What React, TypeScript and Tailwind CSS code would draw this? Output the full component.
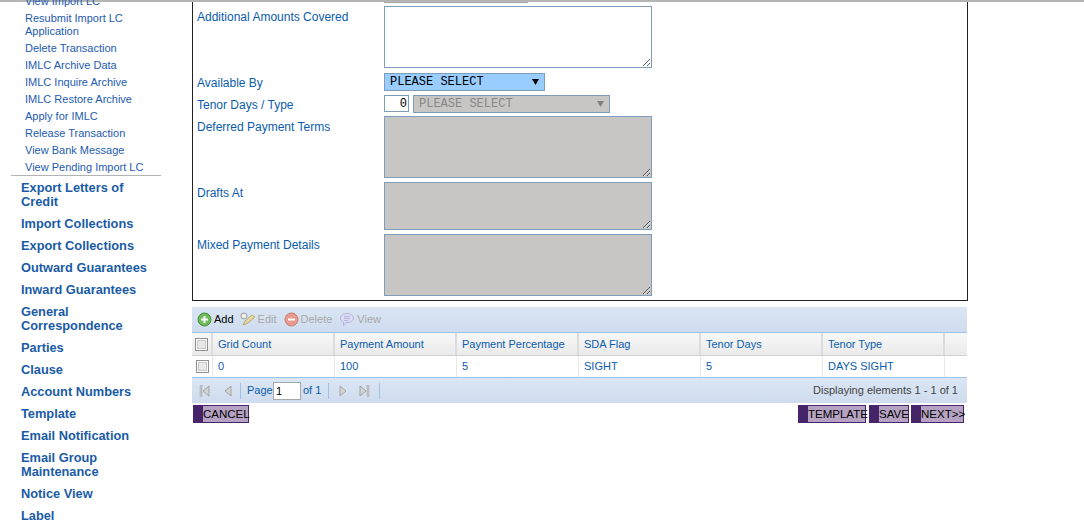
import React from "react";

const sub = ["Delete Transaction", "IMLC Archive Data", "IMLC Inquire Archive", "IMLC Restore Archive", "Apply for IMLC", "Release Transaction", "View Bank Message", "View Pending Import LC"];
const heads = ["Export Letters of Credit", "Import Collections", "Export Collections", "Outward Guarantees", "Inward Guarantees", "General Correspondence", "Parties", "Clause", "Account Numbers", "Template", "Email Notification", "Email Group Maintenance", "Notice View", "Label"];
const cols = [
  ["Grid Count", "0", "w-[122px]"],
  ["Payment Amount", "100", "w-[122px]"],
  ["Payment Percentage", "5", "w-[122px]"],
  ["SDA Flag", "SIGHT", "w-[122px]"],
  ["Tenor Days", "5", "w-[122px]"],
  ["Tenor Type", "DAYS SIGHT", "w-[122px]"],
];

function Check() {
  return (
    <span className="flex h-[13px] w-[13px] items-center justify-center border border-[#8f8f8f] bg-white">
      <span className="h-[9px] w-[9px] border border-[#c8c8c8] bg-[#e8e8e8]" />
    </span>
  );
}

function Row({ label, children, className, pad }: { label: string; children: React.ReactNode; className: string; pad: string }) {
  return (
    <div className={`flex ${className}`}>
      <div className={`w-[191px] shrink-0 pl-[4px] ${pad} text-[12px] leading-[14px] text-[#0b5cad]`}>{label}</div>
      {children}
    </div>
  );
}

function Area({ h, off }: { h: string; off?: boolean }) {
  return (
    <textarea
      disabled={off}
      className={`block w-[268px] border border-[#7f9db9] ${h} ${off ? "bg-[#c8c5c5]" : "bg-white"}`}
    />
  );
}

function Sel({ off, w, arrow }: { off?: boolean; w: string; arrow: string }) {
  return (
    <div className={`relative h-[18px] ${w}`}>
      <select
        disabled={off}
        className={`block h-[18px] w-full appearance-none border border-[#7f9db9] pl-[5px] font-['Liberation_Mono',monospace] text-[12px] leading-[14px] ${off ? "bg-[#c8c5c5] text-[#888] opacity-100" : "bg-[#99ccff] text-black"}`}
      >
        <option>PLEASE SELECT</option>
      </select>
      <svg width="7" height="6" viewBox="0 0 7 6" className={`pointer-events-none absolute top-[6px] ${arrow}`}>
        <path d="M0 0H7L3.500 6Z" fill={off ? "#808080" : "#000"} />
      </svg>
    </div>
  );
}

function Btn({ text, w }: { text: string; w: string }) {
  return (
    <div className={`flex h-[18px] ${w} border border-[#46246a] bg-[#b6a2c2]`}>
      <span className="h-full w-[9px] shrink-0 bg-[#46246a]" />
      <span className="whitespace-nowrap text-[11.5px] leading-[16px] text-black">{text}</span>
    </div>
  );
}

function Pg({ kind }: { kind: "first" | "prev" | "next" | "last" }) {
  const left = kind === "first" || kind === "prev";
  const bar = kind === "first" || kind === "last";
  return (
    <svg width="12" height="14" viewBox="0 0 12 14" className="block">
      {bar && <rect x={left ? 1 : 9} y="1.5" width="2" height="11" fill="#c4c4c4" stroke="#a8a8a8" strokeWidth="0.5" />}
      <path d={left ? "M10 2 L4 7 L10 12 Z" : "M2 2 L8 7 L2 12 Z"} fill="#d4d4d4" stroke="#a4a4a4" />
    </svg>
  );
}

function Sep({ className }: { className: string }) {
  return <span className={`block h-[16px] w-px bg-[#9dc3ea] ${className}`} />;
}

export default function App() {
  return (
    <div className="h-[524px] w-[1084px] overflow-hidden bg-white font-['Liberation_Sans',sans-serif]">
      <div className="h-[2px] w-full bg-[#b4b4b4]" />
      <div className="flex">
        <aside className="w-[192px] shrink-0">
          <div className="-mb-[3px] -mt-[7px] pl-[25px] text-[11px] leading-[13px] text-[#1d5bb0]">
            <div className="h-[17px]">View Import LC</div>
            <div className="h-[30px] w-[130px]">Resubmit Import LC Application</div>
            {sub.map((s) => (
              <div key={s} className="h-[17px] whitespace-nowrap">{s}</div>
            ))}
          </div>
          <div className="ml-[11px] h-px w-[150px] bg-[#b4b4b4]" />
          <div className="mt-[5px] flex flex-col gap-[8px] pl-[21px] text-[12.8px] font-bold leading-[14px] text-[#1a5ba6]">
            {heads.map((h) => (
              <div key={h} className="w-[135px]">{h}</div>
            ))}
          </div>
        </aside>

        <main className="w-[776px] shrink-0">
          <div className="h-[299px] border-x border-b border-[#222]">
            <div className="ml-[191px] h-px w-[144px] bg-[#a8a8a8]" />
            <div className="pt-[3px]">
              <Row label="Additional Amounts Covered" pad="pt-[4px]" className="h-[67px]"><Area h="h-[62px]" /></Row>
              <Row label="Available By" pad="pt-[3px]" className="h-[22px]">
                <Sel w="w-[161px]" arrow="left-[148px]" />
              </Row>
              <Row label="Tenor Days / Type" pad="pt-[3px]" className="h-[21px]">
                <input readOnly value="0" className="h-[17px] w-[25px] border border-[#7f9db9] bg-white px-[1px] text-right font-['Liberation_Mono',monospace] text-[12px] text-black" />
                <div className="ml-[4px]"><Sel off w="w-[197px]" arrow="left-[184px]" /></div>
              </Row>
              <Row label="Deferred Payment Terms" pad="pt-[4px]" className="h-[66px]"><Area h="h-[62px]" off /></Row>
              <Row label="Drafts At" pad="pt-[4px]" className="h-[52px]"><Area h="h-[48px]" off /></Row>
              <Row label="Mixed Payment Details" pad="pt-[4px]" className="h-[62px]"><Area h="h-[62px]" off /></Row>
            </div>
          </div>

          <div className="mt-[6px] w-[775px] text-[11px] text-[#0b5cad]">
            <div className="flex h-[26px] items-center gap-[4px] border-b border-[#9dc3ea] bg-gradient-to-b from-[#dae6f4] to-[#cfdcee] pl-[5px] text-[#a8a8a8]">
              <span className="flex items-center gap-[2px] text-black">
                <svg width="15" height="15" viewBox="0 0 15 15">
                  <circle cx="7.5" cy="7.5" r="6.5" fill="#6dbb5b" stroke="#4a8f3c" />
                  <path d="M7.5 4v7M4 7.5h7" stroke="#fff" strokeWidth="2" />
                </svg>
                Add
              </span>
              <span className="ml-[2px] flex items-center gap-[2px]">
                <svg width="16" height="15" viewBox="0 0 16 15">
                  <circle cx="4" cy="4" r="3" fill="#eee" stroke="#999" />
                  <path d="M3 13 L5 9 L12 3 L15 5 L8 11 Z" fill="#e8d8a0" stroke="#b8a878" />
                </svg>
                Edit
              </span>
              <span className="ml-[3px] flex items-center gap-[2px]">
                <svg width="15" height="15" viewBox="0 0 15 15">
                  <circle cx="7.5" cy="7.5" r="6.5" fill="#e89a8e" stroke="#c97f76" />
                  <rect x="4" y="6.5" width="7" height="2" fill="#fff" />
                </svg>
                Delete
              </span>
              <span className="ml-[3px] flex items-center gap-[2px]">
                <svg width="16" height="15" viewBox="0 0 16 15">
                  <path d="M8 1.5c3.600 0 6.500 2 6.500 4.500S11.600 10.500 8 10.500H7L4.500 13.500V10C2.500 9.300 1.500 7.800 1.500 6 1.500 3.500 4.400 1.500 8 1.500Z" fill="#dcdcf4" stroke="#b4b4e0" />
                  <path d="M5 4.500h6M5 6.500h6M5 8.500h4" stroke="#b4b4e0" />
                </svg>
                View
              </span>
            </div>
            <div className="flex h-[23px] border-b border-[#d0d0d0] bg-gradient-to-b from-[#f8f8f8] to-[#eaeaea]">
              <div className="flex w-[21px] shrink-0 items-center justify-center border-r-2 border-[#dcdcdc]"><Check /></div>
              {cols.map(([h, , w]) => (
                <div key={h} className={`${w} flex items-center border-r-2 border-[#dcdcdc] pl-[5px]`}>{h}</div>
              ))}
            </div>
            <div className="flex h-[22px] border-b border-[#9dc3ea] bg-white">
              <div className="flex w-[21px] shrink-0 items-center justify-center border-r border-[#e8e8e8]"><Check /></div>
              {cols.map(([h, v, w]) => (
                <div key={h} className={`${w} flex items-center border-r border-[#e8e8e8] pl-[5px]`}>{v}</div>
              ))}
            </div>
            <div className="flex h-[25px] items-center bg-gradient-to-b from-[#dae6f4] to-[#cfdcee] pl-[7px] pr-[9px]">
              <Pg kind="first" />
              <span className="ml-[10px]"><Pg kind="prev" /></span>
              <Sep className="ml-[7px]" />
              <span className="ml-[6px] w-[26px]">Page</span>
              <input readOnly value="1" className="h-[18px] w-[28px] border border-[#a8a8a8] bg-white px-[2px] text-[11px] text-black" />
              <span className="ml-[2px] w-[20px]">of 1</span>
              <Sep className="ml-[5px]" />
              <span className="ml-[9px]"><Pg kind="next" /></span>
              <span className="ml-[8px]"><Pg kind="last" /></span>
              <Sep className="ml-[9px]" />
              <span className="ml-auto text-[#444]">Displaying elements 1 - 1 of 1</span>
            </div>
          </div>

          <div className="mt-[2px] flex w-[772px] pl-[1px]">
            <Btn text="CANCEL" w="w-[56px]" />
            <div className="ml-auto flex gap-[2px]">
              <Btn text="TEMPLATE" w="w-[68px]" />
              <Btn text="SAVE" w="ml-px w-[40px]" />
              <Btn text="NEXT>>" w="w-[53px]" />
            </div>
          </div>
        </main>
      </div>
    </div>
  );
}
